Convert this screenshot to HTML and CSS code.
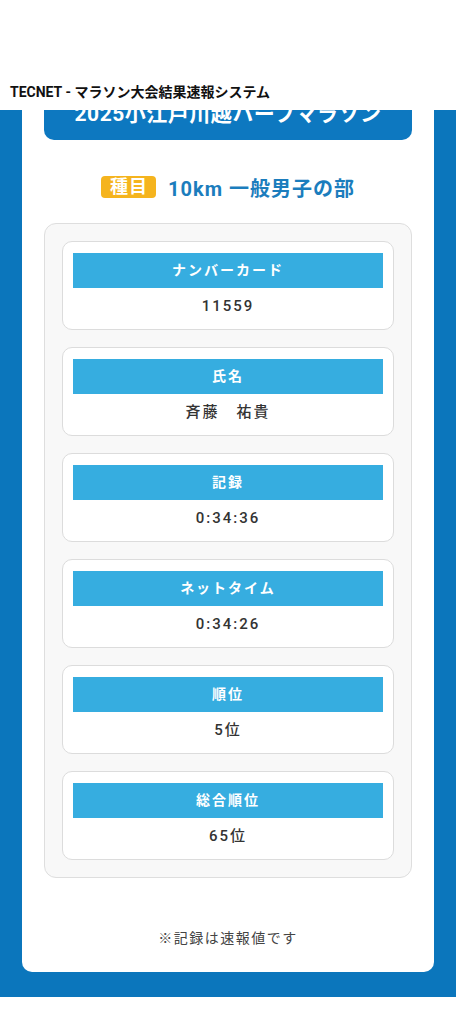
FILE: index.html
```html
<!DOCTYPE html>
<html lang="ja">
<head>
    <meta charset="UTF-8">
    <meta name="viewport" content="width=device-width, initial-scale=1.0">
    <title>TECNET - マラソン大会結果速報システム</title>
    <link rel="stylesheet" href="styles.css">
</head>
<body>
    <header class="topbar">
        <p class="site-title">TECNET - マラソン大会結果速報システム</p>
    </header>

    <main class="stage">
        <section class="sheet">
            <h1 class="race-name">2025小江戸川越ハーフマラソン</h1>

            <div class="category">
                <span class="badge">種目</span>
                <span class="category-name">10km 一般男子の部</span>
            </div>

            <div class="results">
                <div class="item">
                    <div class="item-label">ナンバーカード</div>
                    <div class="item-value">11559</div>
                </div>
                <div class="item">
                    <div class="item-label">氏名</div>
                    <div class="item-value">斉藤　祐貴</div>
                </div>
                <div class="item">
                    <div class="item-label">記録</div>
                    <div class="item-value">0:34:36</div>
                </div>
                <div class="item">
                    <div class="item-label">ネットタイム</div>
                    <div class="item-value">0:34:26</div>
                </div>
                <div class="item">
                    <div class="item-label">順位</div>
                    <div class="item-value">5位</div>
                </div>
                <div class="item">
                    <div class="item-label">総合順位</div>
                    <div class="item-value">65位</div>
                </div>
            </div>

            <p class="note">※記録は速報値です</p>
        </section>
    </main>
</body>
</html>
```

FILE: styles.css
```css
body{
    margin: 0;
    background-color: #ffffff;
    font-family: Roboto, "Noto Sans CJK JP", sans-serif;
    color: #333333;
}

/* top bar sits over the page, hiding the upper part of the banner */
.topbar{
    position: absolute;
    top: 0;
    left: 0;
    right: 0;
    height: 110px;
    background-color: #ffffff;
    z-index: 2;
}
.site-title{
    margin: 0;
    padding: 82px 0 0 10px;
    font-size: 14px;
    line-height: 20px;
    font-weight: 700;
    color: #111111;
}

.stage{
    background-color: #0b76bc;
    padding: 70px 22px 25px;
}
.sheet{
    background-color: #ffffff;
    border-radius: 10px;
    padding: 18px 22px 24px;
}

.race-name{
    margin: 0;
    height: 52px;
    line-height: 52px;
    background-color: #0d78c0;
    border-radius: 10px;
    color: #ffffff;
    text-align: center;
    font-size: 21px;
    font-weight: 700;
    letter-spacing: 0.5px;
}

.category{
    display: flex;
    justify-content: center;
    align-items: center;
    gap: 12px;
    margin: 34px 0 23px;
    height: 26px;
}
.badge{
    background-color: #f5b41e;
    color: #ffffff;
    font-size: 18px;
    font-weight: 700;
    line-height: 22px;
    padding: 0 8px 0 9px;
    border-radius: 4px;
    letter-spacing: 1px;
}
.category-name{
    color: #1b7dbd;
    font-size: 20px;
    font-weight: 700;
    letter-spacing: 1px;
}

.results{
    display: flex;
    flex-direction: column;
    gap: 17px;
    background-color: #f8f8f8;
    border: 1px solid #dedede;
    border-radius: 12px;
    padding: 17px;
}
.item{
    background-color: #ffffff;
    border: 1px solid #dcdcdc;
    border-radius: 10px;
    padding: 11px 10px 10px;
    height: 89px;
    box-sizing: border-box;
}
.item-label{
    background-color: #36ade0;
    color: #ffffff;
    height: 35px;
    line-height: 35px;
    text-align: center;
    font-size: 14px;
    font-weight: 700;
    letter-spacing: 2px;
}
.item-value{
    margin-top: 6px;
    line-height: 24px;
    text-align: center;
    font-size: 15px;
    font-weight: 500;
    letter-spacing: 2px;
    color: #333333;
}

.note{
    margin: 50px 0 0;
    line-height: 20px;
    text-align: center;
    font-size: 14px;
    letter-spacing: 1.5px;
    color: #444444;
}
```
